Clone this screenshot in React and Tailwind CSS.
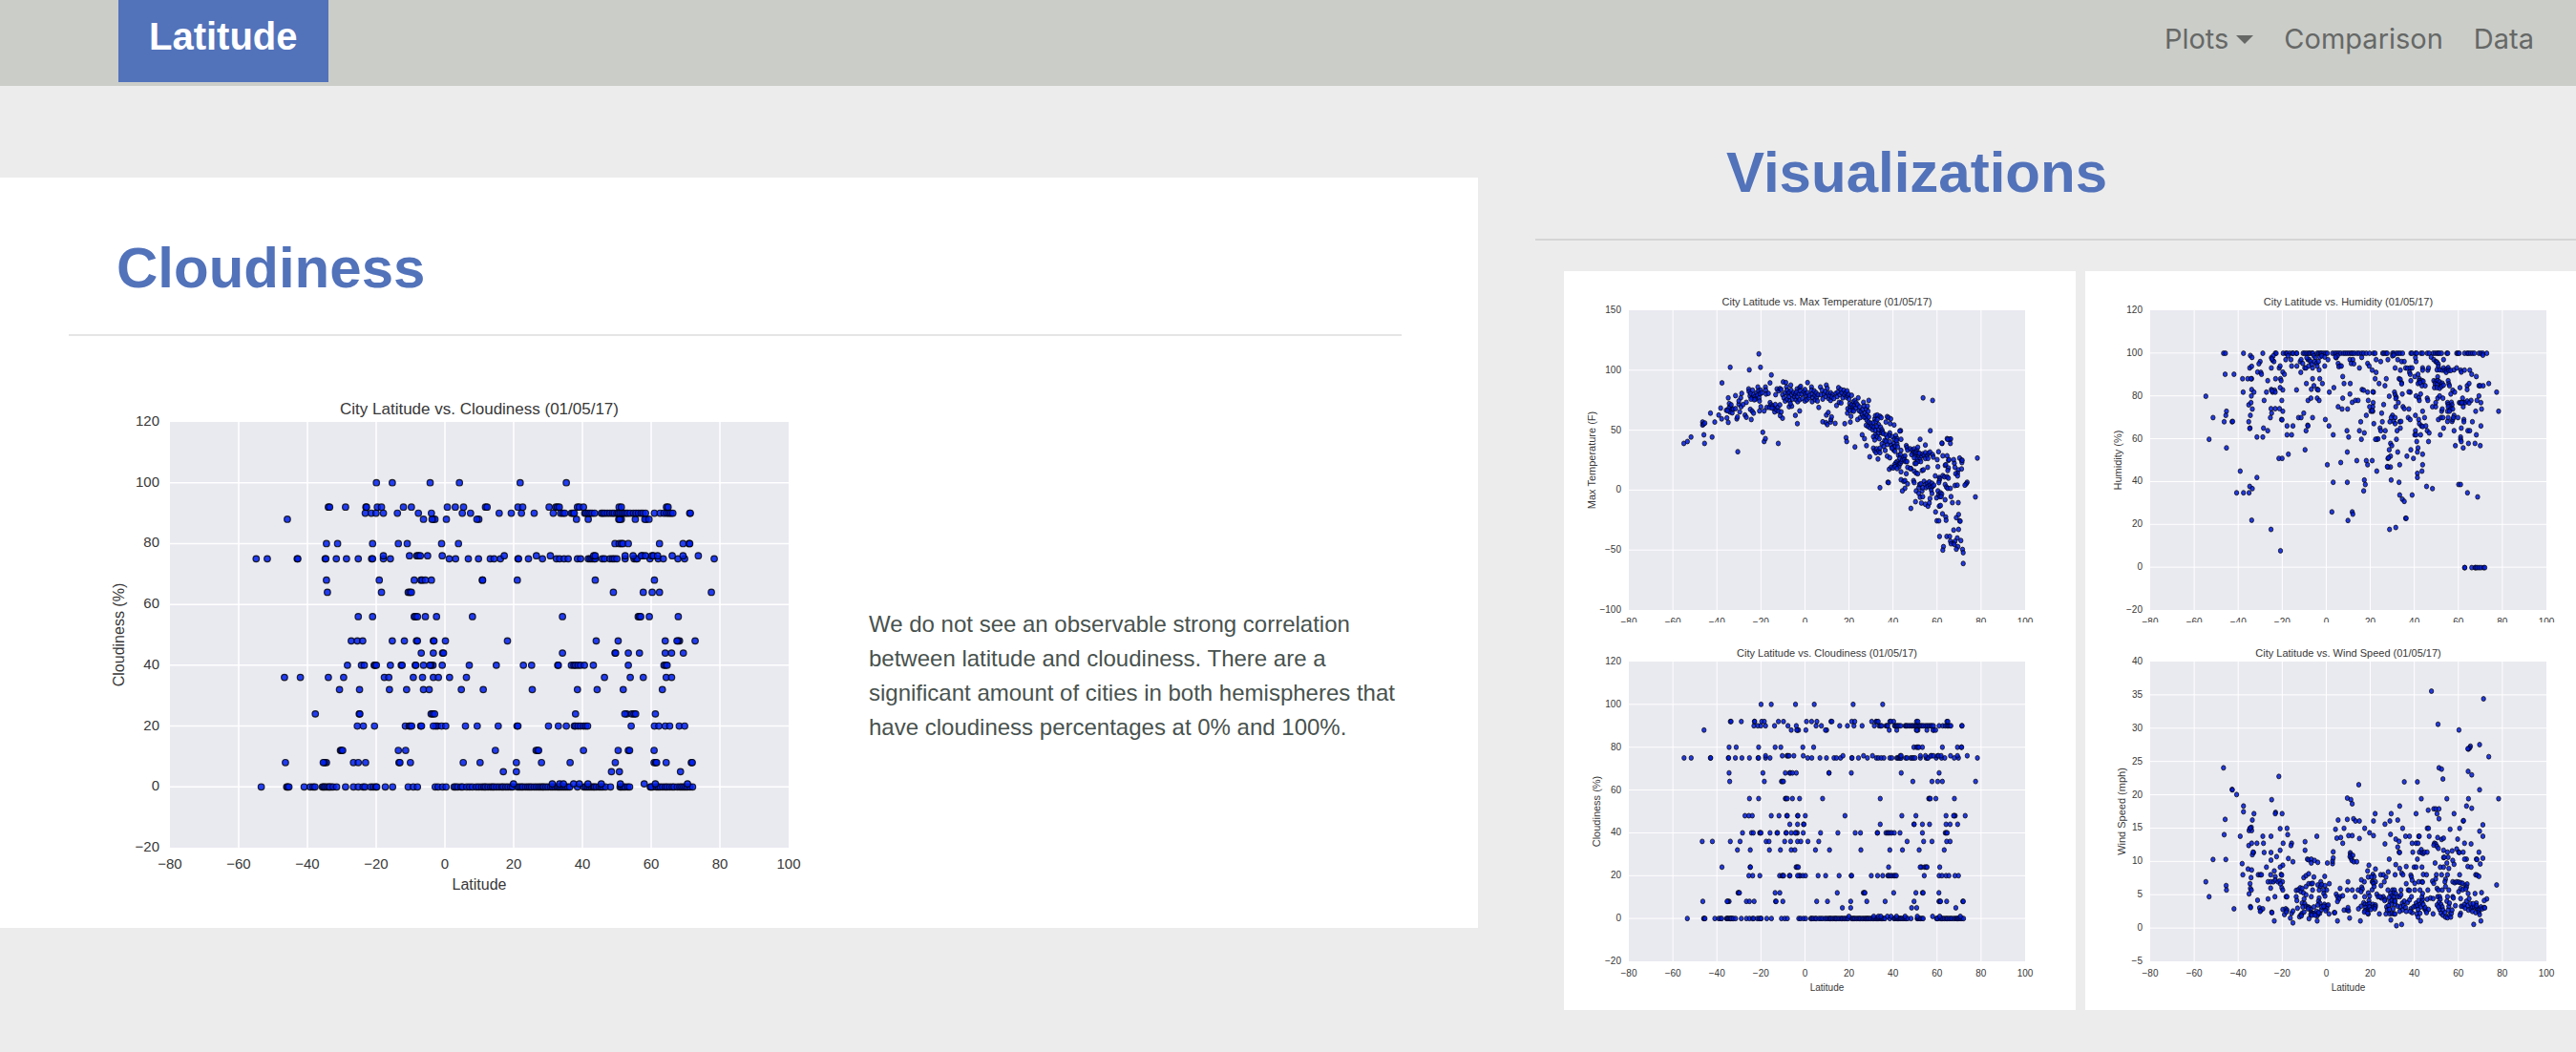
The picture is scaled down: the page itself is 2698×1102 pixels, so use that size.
import React from "react";

const INK = "#383838";
const LATITUDES = [-80, -60, -40, -20, 0, 20, 40, 60, 80, 100];

const label = (n) => String(n).replace("-", "\u2212");

// Reads "x,y x,y ..." into pairs.
const pairs = (text) =>
  text
    .trim()
    .split(/\s+/)
    .map((p) => p.split(",").map(Number));

// Each row is a cloudiness value with the horizontal positions of its cities.
const CLOUD_FRAME = [233, 120, 2178, -20];
const CLOUD_ROWS = {
  100: "882 932 1051 1143 1334 1479",
  92: "731 735 785 849 851 885 898 967 992 1105 1130 1156 1225 1230 1327 1342 1425 1446 1451 1457 1514 1520 1533 1645 1652 1794 1799",
  90: "847 866 881 904 948 1014 1055 1152 1178 1268 1306 1338 1378 1438 1461 1468 1474 1495 1500 1504 1537 1541 1548 1554 1560 1568 1589 1594 1600 1608 1616 1624 1630 1638 1643 1648 1654 1660 1666 1672 1680 1690 1698 1706 1714 1720 1728 1756 1774 1786 1795 1802 1808 1814 1867 1869",
  88: "602 1030 1061 1066 1057 1102 1204 1198 1511 1548 1652 1644 1647 1696 1730 1726 1739",
  80: "725 760 870 951 979 1087 1140 1632 1645 1652 1657 1674 1772 1846 1865 1867",
  75: "504 539 633 635 721 723 756 788 825 867 870 904 926 1111 1131 1171 1203 1240 1252 1272 1327 1329 1360 1404 1448 1458 1472 1485 1514 1524 1548 1554 1560 1566 1570 1592 1599 1616 1624 1630 1638 1664 1692 1698 1702 1742 1768 1784 1830 1851 1944",
  76: "904 986 1009 1014 1020 1043 1089 1284 1385 1429 1565 1570 1664 1689 1719 1715 1728 1748 1753 1766 1812 1846 1894",
  68: "725 891 1001 1022 1026 1036 1055 1215 1216 1325 1570 1756",
  64: "728 898 982 987 992 1627 1721 1749 1772 1935",
  56: "825 870 1001 1005 1011 1036 1071 1184 1467 1705 1709 1713 1740 1831",
  48: "803 822 839 932 970 1008 1011 1061 1063 1099 1294 1573 1642 1790 1835 1830 1827 1884",
  44: "1023 1061 1090 1093 1467 1632 1634 1674 1709 1790 1810 1847",
  40: "791 835 844 875 878 882 926 960 963 1004 1006 1030 1060 1054 1050 1089 1174 1259 1344 1370 1452 1454 1495 1503 1508 1516 1524 1536 1564 1674 1786 1791 1796",
  36: "593 643 731 779 907 921 998 1027 1061 1077 1112 1165 1599 1680 1721 1793 1810",
  32: "766 829 923 977 1030 1048 1149 1218 1372 1514 1576 1658 1781",
  24: "690 828 830 1054 1059 1065 1508 1669 1663 1685 1692 1697 1759",
  20: "822 841 876 973 985 989 993 1021 1024 1074 1068 1061 1087 1100 1162 1199 1265 1324 1327 1423 1454 1479 1504 1508 1516 1524 1533 1540 1546 1683 1756 1770 1790 1804 1834 1851",
  12: "769 772 776 951 974 1256 1384 1389 1392 1533 1642 1674 1678 1755",
  8: "596 725 719 715 810 825 848 953 956 989 1155 1208 1322 1401 1491 1633 1755 1760 1763 1793 1872 1875",
  5: "1281 1322 1621 1646 1838",
  1: "1313 1435 1458 1470 1502 1520 1547 1589 1649 1724 1759 1860",
  0: "520 600 603 607 655 674 683 689 712 716 720 726 732 740 735 746 757 785 810 825 840 846 864 872 880 883 910 933 982 998 1011 1067 1076 1090 1101 1126 1131 1138 1148 1153 1166 1175 1184 1196 1204 1213 1220 1225 1233 1241 1247 1252 1260 1268 1276 1281 1289 1296 1304 1310 1326 1332 1338 1343 1351 1358 1364 1370 1378 1385 1392 1398 1404 1408 1415 1422 1430 1436 1443 1450 1455 1460 1466 1472 1478 1484 1490 1514 1534 1540 1546 1552 1558 1564 1568 1574 1582 1588 1594 1602 1618 1648 1652 1658 1664 1672 1678 1743 1750 1746 1762 1768 1774 1782 1790 1796 1804 1812 1818 1828 1836 1842 1848 1854 1860 1868 1876",
};
const CLOUDINESS = Object.entries(CLOUD_ROWS).flatMap(([value, xs]) =>
  xs.split(" ").map((x) => [Number(x), Number(value)])
);

const TEMP_FRAME = [249, 165, 1453, 1106];
const TEMPERATURE = pairs(`
416,583 427,577 438,563 473,516 473,525 476,522 480,519 477,556 479,583 502,563 497,488 510,516 522,494 528,472 531,506 532,393
557,344 615,352 644,302 649,344 682,368 678,393 580,609 656,548 660,577 664,568 703,583 761,521 755,495 768,481 547,503 551,517
551,440 545,479 554,458 557,468 553,472 560,462 562,477 556,484 563,487 549,480 566,475 573,433 573,474 577,506 579,500 583,460
586,484 589,440 592,426 590,468 596,461 602,494 606,501 606,454 583,450 613,412 614,420 617,434 619,426 625,416 624,440 628,430
632,436 634,444 637,424 641,406 640,432 643,418 645,440 648,427 650,416 653,424 646,450 630,446 620,444 618,476 624,482 628,488
621,508 650,468 646,481 660,481 664,406 665,416 666,428 673,426 668,470 676,470 678,455 681,462 686,466 690,474 694,461 692,484
698,478 702,470 704,482 708,462 709,496 712,484 716,504 684,472 695,430 699,412 704,418 708,411 712,414 716,430 718,390 726,392
724,424 728,406 730,416 732,428 720,440 724,450 730,444 735,436 736,422 738,450 741,400 742,416 744,430 746,444 749,424 736,468
744,466 740,458 752,436 755,428 757,446 760,412 758,422 761,436 762,452 766,428 768,408 771,404 770,418 768,446 774,428 776,442
780,420 784,414 785,428 784,450 788,434 790,446 792,392 792,424 796,440 798,432 804,406 804,416 806,428 808,440 806,452 812,418
814,432 815,446 818,424 820,438 822,450 824,430 826,470 831,406 833,430 836,416 838,444 842,428 846,420 849,400 848,436 852,410
854,426 856,442 858,432 862,448 862,424 868,430 866,438 872,442 878,426 880,464 882,436 886,408 884,422 888,454 890,430 893,414
896,424 899,440 902,416 904,430 908,424 910,438 914,434 918,444 916,428 912,418 838,515 848,518 852,524 849,494 855,486 862,516
863,508 865,500 876,520 905,521 894,456 909,565 911,577 936,594 958,556 965,568 971,590 981,625 978,448 946,440 913,488 924,498
922,516 914,474 920,458 922,468 926,462 930,470 926,432 928,480 932,452 936,448 934,464 938,472 940,456 944,462 948,480 950,468
920,480 932,482 944,508 952,502 954,484 958,492 960,476 962,454 964,466 962,500 966,488 968,502 970,476 972,494 974,466 972,510
976,482 978,500 978,516 970,526 976,530 984,520 982,534 988,528 990,540 992,518 994,532 996,506 998,496 1004,494 1000,514 1004,508
1012,498 1016,502 1008,524 1002,530 998,542 1008,540 1014,532 1018,540 1016,550 1006,552 998,556 992,562 996,572 1004,562 1010,568
1020,546 1022,552 1030,516 1034,499 1038,502 1045,506 1043,521 1055,525 1042,550 1040,558 1030,556 1034,564 1026,574 1018,584
1024,592 1034,586 1030,576 1042,578 1050,562 1060,558 1056,570 1064,568 1075,543 1072,544 1076,570 1054,584 1046,590 1050,596
1058,592 1064,584 1062,574 1054,604 1058,608 1048,598 992,598 996,606 1002,600 1000,612 1008,606 1012,598 1012,612 1028,605
1006,632 1034,623 1042,628 1012,722 1036,705 1038,706 1066,594 1076,605 1092,590 1094,596 1096,604 1068,620 1074,618 1072,630
1064,640 1068,648 1060,644 1062,652 1056,650 1070,656 1074,646 1078,640 1080,634 1084,626 1088,622 1086,634 1090,640 1094,640
1040,664 1046,658 1052,660 1058,656 1064,662 1076,672 1092,678 1096,658 1106,662 1104,600 1110,604 1116,600 1112,612 1108,618
1118,612 1120,620 1124,604 1127,595 1122,612 1128,614 1130,624 1124,632 1134,632 1138,622 1132,614 1142,616 1146,620 1150,612
1136,640 1126,640 1116,628 1150,588 1134,570 1143,440 1172,448 1165,543 1150,630 1156,622 1160,614 1158,630 1164,610 1172,618
1174,626 1186,634 1190,609 1203,622 1216,622 1220,636 1201,583 1200,582 1216,568 1224,570 1227,569 1226,583 1218,570 1118,646
1122,646 1116,670 1122,676 1127,678 1140,668 1144,666 1157,658 1188,656 1210,652 1212,650 1220,660 1218,668 1238,645 1240,658
1236,634 1222,634 1254,629 1260,636 1261,643 1262,636 1260,663 1250,666 1248,676 1242,678 1248,685 1308,629 1277,705 1274,710
1270,714 1302,751 1180,685 1192,690 1194,694 1203,684 1208,688 1216,688 1220,692 1192,700 1191,706 1210,712 1214,720 1218,724
1226,724 1228,750 1240,715 1247,714 1250,769 1232,769 1210,760 1104,662 1076,697 1084,702 1088,700 1096,710 1088,724 1080,732
1114,700 1116,706 1122,732 1130,722 1132,712 1136,710 1140,732 1142,722 1146,702 1150,712 1152,722 1156,708 1158,718 1162,704
1164,714 1166,722 1170,708 1172,718 1176,714 1168,730 1170,740 1130,740 1134,752 1142,750 1120,766 1138,770 1150,774 1158,780
1162,770 1164,756 1106,787 1184,754 1188,732 1190,744 1194,750 1196,738 1200,742 1198,750 1192,780 1196,778 1181,798 1202,804
1212,814 1213,824 1185,826 1191,826 1244,816 1251,806 1254,826 1256,827 1251,853 1236,855 1193,875 1215,875 1224,875 1247,880
1258,888 1226,890 1228,898 1236,896 1240,890 1238,900 1249,907 1244,915 1205,907 1203,918 1263,916 1265,926 1265,960`);

const HUMID_FRAME = [266, 165, 1476, 1106];
const HUMIDITY = pairs(`
490,300 496,300 551,300 610,300 648,300 651,300 672,300 680,300 684,300 692,300 700,300 703,300 712,300 714,300 733,300 738,300
744,300 750,300 754,300 760,300 763,300 776,300 781,300 786,300 790,300 796,300 802,300 807,300 823,300 830,300 836,300 842,300
848,300 856,300 862,300 868,300 874,300 880,300 884,300 890,300 898,300 904,300 912,300 918,300 926,300 936,300 948,300 953,300
976,300 980,300 986,300 990,300 1006,300 1010,300 1018,300 1024,300 1030,300 1037,300 1062,300 1066,300 1076,300 1080,300
1093,300 1098,300 1112,300 1118,300 1130,300 1136,300 1142,300 1146,300 1150,300 1156,300 1172,300 1175,300 1202,300 1206,300
1210,300 1226,300 1234,300 1238,300 1244,300 1250,300 1256,300 1270,300 1276,300 1282,300 1294,300 1282,306 572,307 577,313
602,326 598,333 570,346 576,341 576,380 548,380 564,380 574,380 495,366 522,366 594,359 604,360 606,366 625,386 636,346 640,322
644,326 636,314 642,308 638,318 649,380 664,380 666,386 660,346 663,340 671,359 676,366 680,320 687,308 696,320 698,340 714,340
724,326 727,320 732,332 726,360 738,346 742,346 748,320 752,320 744,314 750,340 762,346 756,326 760,334 766,308 770,314 768,326
774,332 776,340 780,326 782,352 784,312 790,308 799,340 799,312 809,320 762,380 784,380 743,395 766,402 792,395 758,413 776,413
779,415 713,415 671,415 663,408 576,414 583,422 550,422 575,434 621,422 636,414 640,422 646,416 648,422 638,418 436,435 458,502
446,570 492,515 516,515 518,514 499,482 497,495 499,597 567,462 574,455 578,475 572,495 567,515 571,535 570,536 614,448 635,474
648,474 661,474 671,482 668,448 637,488 633,502 667,508 669,509 735,488 719,502 727,502 762,502 747,526 748,528 742,543 748,448
757,441 776,441 782,448 612,535 625,543 592,563 610,563 684,528 702,528 684,556 698,556 739,603 688,617 659,630 669,630 541,670
592,690 570,718 578,725 530,738 551,738 568,738 576,824 635,853 664,920 834,314 838,308 832,312 840,332 846,340 842,342 850,340
876,320 885,320 880,332 888,333 905,346 912,313 930,332 935,340 944,353 956,360 956,320 970,326 992,320 1006,308 1010,306
1022,320 1014,346 1030,353 1034,326 1042,326 1046,346 1052,347 1060,346 1066,346 1058,360 1060,366 1078,326 1076,314 1098,346
1098,353 1114,353 1116,346 1124,312 1132,320 1138,326 1142,328 1146,334 1146,342 1142,352 1150,352 1158,353 1162,346 1166,354
1172,350 1176,345 1170,360 1178,354 1184,354 1194,352 1202,346 1214,353 1216,359 1226,353 1242,353 1248,366 1262,373 1162,320
854,373 858,395 877,395 827,408 813,422 876,428 913,414 918,416 930,422 948,422 946,421 953,380 965,395 983,402 987,380 1026,380
1030,382 1034,393 1034,396 1062,386 1074,373 1084,366 1088,380 1088,386 1096,386 1100,388 1084,395 1096,402 1106,402 1090,392
1132,386 1138,388 1144,374 1144,386 1136,396 1142,398 1150,390 1154,398 1158,394 1134,408 1142,408 1150,410 1156,404 1162,400
1176,386 1178,396 1180,402 1190,416 1196,422 1184,428 1212,408 1234,402 1240,395 1234,414 1270,402 1274,402 1283,402 1300,395
1324,422 1330,482 1270,434 1264,448 1246,448 1276,455 1278,475 1260,482 1276,528 1250,515 1220,441 1222,455 1228,455 1234,450
1240,456 1210,455 1214,456 1222,468 1218,455 996,435 1012,422 1014,430 1018,438 1016,442 1036,428 1060,422 1056,421 1078,434
1086,440 1092,428 1088,448 1112,441 1114,448 1128,468 1138,468 1138,455 1144,441 1150,434 1160,441 1174,455 1176,461 1186,454
1188,462 1182,468 1176,468 1184,475 1190,475 1174,482 1156,482 1158,475 1180,482 854,441 840,468 852,475 869,475 883,454 893,448
901,448 932,448 947,455 946,468 936,468 940,482 946,482 944,480 926,495 979,461 973,488 949,521 909,515 975,515 968,535 920,550
905,543 867,543 872,563 911,570 825,556 812,528 801,508 958,570 962,569 980,563 970,543 984,543 954,570 1016,468 1024,455
1038,468 1042,474 1056,475 1006,495 1002,502 1014,502 1010,514 998,515 1014,521 1028,515 1032,514 1030,535 1020,543 1018,570
1076,495 1054,502 1060,508 1086,508 1088,521 1094,528 1098,530 1108,528 1104,502 1098,482 1076,543 1074,556 1078,556 1092,556
1112,543 1118,550 1080,577 1116,577 1152,556 1162,535 1146,508 1154,502 1160,502 1174,514 1176,502 1188,514 1190,508 1194,495
1192,502 1206,502 1224,508 1224,515 1216,535 1194,543 1236,543 1242,543 1214,563 1214,570 1216,577 1198,590 1222,597 1238,583
1258,583 1274,590 1262,556 868,610 897,637 926,637 944,637 848,643 807,650 930,650 958,670 920,698 923,712 918,732 868,705
825,705 821,798 883,798 885,805 870,825 1000,583 1004,590 996,603 1022,610 1062,603 1084,597 1082,610 1098,617 1000,623 992,630
994,628 1050,623 1070,630 1028,650 1000,657 992,657 990,656 1098,650 1096,670 1082,677 1082,690 1002,698 1026,705 1028,745
1066,745 1036,758 1042,765 1110,718 1128,725 1046,818 1048,818 1016,847 997,853 1208,712 1214,712 1235,738 1266,751 1226,973
1227,973 1248,973 1258,973 1260,973 1264,973 1270,973 1276,973 1284,973 1288,973`);

const WIND_FRAME = [266, 99, 1476, 1041];
const WIND = pairs(`
490,433 516,501 517,502 530,517 551,553 551,571 495,595 492,643 541,648 583,577 578,597 575,620 570,624 568,630 576,630 572,622
567,677 576,670 592,670 610,648 612,670 614,699 582,699 578,706 580,698 458,721 497,721 547,734 565,751 576,754 549,769 574,778
571,797 436,791 446,838 498,803 499,817 522,876 568,829 572,812 575,817 572,869 573,872 594,849 596,769 602,769 606,769 600,873
604,880 610,876 602,884 635,648 637,533 659,460 649,573 648,577 669,577 663,624 684,623 686,643 672,670 698,670 696,677 663,692
635,699 652,712 635,723 688,718 702,728 739,665 739,692 775,648 671,739 663,745 621,745 645,757 634,769 648,775 666,768 668,770
626,791 634,791 642,791 648,786 656,791 662,788 670,791 664,798 668,810 634,811 671,817 647,838 626,845 681,838 684,838 645,914
637,887 638,888 671,878 680,876 684,880 676,894 682,886 694,905 698,890 702,883 702,920 722,901 726,895 730,890 736,886 728,898
716,874 712,838 714,850 712,818 718,816 724,810 726,822 734,826 736,845 742,832 730,858 738,860 732,870 742,868 748,870 752,872
730,812 742,806 750,797 758,797 762,796 735,778 742,772 750,766 766,776 799,774 746,720 750,722 758,720 758,732 768,724 778,730
807,732 823,734 823,726 825,716 825,697 813,797 787,791 778,801 786,806 790,800 800,803 805,817 796,818 782,817 762,817 796,828
800,836 758,838 782,842 780,852 784,858 778,864 766,870 756,878 748,876 758,888 762,890 756,894 768,890 774,884 778,894 776,898
784,890 788,880 790,870 798,862 800,874 806,866 810,864 806,876 802,882 812,892 828,888 830,888 776,914 751,907 796,868 760,896
770,896 780,888 903,486 868,528 879,533 883,546 868,595 840,597 887,593 893,600 905,600 832,626 858,623 836,654 848,652 854,670
872,646 883,646 905,655 921,623 936,637 948,646 948,600 953,577 983,610 983,672 877,700 878,706 876,712 885,708 880,718 882,724
888,728 897,728 934,739 930,757 954,751 932,776 870,791 846,812 868,817 883,817 901,817 912,808 914,814 910,822 920,791 911,785
834,830 838,838 846,838 854,835 842,845 838,853 892,838 921,838 932,826 936,836 944,816 958,830 962,838 918,857 922,862 930,862
934,850 936,860 910,868 902,876 924,872 930,878 936,870 928,884 922,882 932,892 920,886 940,878 946,862 948,870 954,864 954,870
952,876 858,880 868,880 872,882 870,872 875,905 838,914 908,914 966,892 930,890 946,768 950,775 942,776 944,791 946,792 954,791
948,797 950,806 971,803 970,769 978,769 986,776 993,760 981,791 1000,642 1016,657 1026,664 1022,597 998,600 1002,577 1028,553
1037,623 1042,477 1082,477 1094,530 1078,577 1046,648 1058,648 1086,648 1088,648 1118,648 1112,623 1116,623 1115,566 1125,192
1145,296 1209,314 1284,216 1272,360 1244,365 1242,370 1238,374 1236,373 1300,398 1148,433 1156,437 1160,468 1237,444 1248,455
1272,502 1330,530 1324,801 1238,530 1232,553 1248,560 1172,530 1194,577 1132,562 1138,562 1148,562 1142,577 1148,593 1222,600
1223,599 1282,612 1272,632 1282,648 1211,623 1182,626 1205,657 1226,670 1246,672 1270,698 1282,717 1274,735 1262,720 1264,721
1232,720 1226,720 1202,688 1188,694 1208,698 1210,699 1222,698 1144,652 1156,658 1162,654 1066,670 1078,670 1084,670 1134,670
1138,672 1132,676 1142,680 1146,686 1162,692 1174,698 1022,682 1026,698 1028,699 1068,698 1088,698 1094,690 1096,700 1100,702
1104,698 1112,698 1176,714 1162,715 1164,714 1190,724 1194,736 1172,732 1136,732 996,720 1082,720 1016,737 1028,749 1048,743
1072,745 1078,745 1096,745 1152,745 1162,745 1178,749 1236,743 1246,745 1034,764 1014,769 1038,769 1062,770 1064,776 1066,786
1048,797 1100,768 1110,769 1140,769 1156,769 1174,769 1211,769 1260,769 1264,770 1270,774 1138,782 1128,789 1132,796 1168,783
1166,791 1074,796 1086,791 1096,791 1098,792 1190,791 1196,794 1202,791 1208,792 1214,794 1220,796 1228,802 1234,798 1232,808
1278,825 1258,828 1237,828 1294,845 1286,850 992,817 1006,817 1012,817 1010,826 1016,828 1032,817 1054,817 1058,818 1074,817
1090,817 1114,817 1142,812 1146,817 1158,817 1178,817 1168,806 1208,822 1214,812 1220,816 1230,814 1000,828 1004,836 1010,840
1022,838 1028,838 1032,832 978,838 972,842 984,846 968,838 982,850 996,840 998,854 1004,850 1012,850 1002,862 1014,862 1014,852
988,870 994,866 990,880 986,892 998,892 1004,890 1010,892 1014,892 996,878 1008,876 1022,868 1030,870 1036,858 1042,852 1036,880
1028,884 1040,866 1046,872 1052,856 1048,884 1058,848 1064,838 1062,876 1066,888 1060,884 1070,870 1076,868 1078,858 1082,866
1086,850 1090,862 1092,870 1096,854 1098,846 1100,862 1096,838 1098,828 1084,878 1080,892 1084,902 1092,914 1090,890 1104,876
1108,882 1106,872 1116,878 1110,888 1130,892 1112,846 1122,842 1130,844 1144,838 1150,838 1152,846 1148,856 1142,864 1154,862
1158,870 1150,878 1146,870 1160,880 1154,890 1160,896 1166,888 1168,902 1174,904 1180,896 1184,902 1176,880 1186,890 1188,880
1178,868 1172,852 1180,858 1190,838 1192,842 1174,838 1198,866 1214,844 1216,868 1222,868 1214,890 1212,896 1226,862 1228,874
1232,852 1240,844 1236,866 1238,880 1246,876 1250,870 1244,860 1250,884 1262,858 1256,870 1262,872 1266,880 1260,888 1270,886
1272,876 1276,870 1280,876 1286,872 1288,873 1272,894 1262,866 1252,860 1276,914 1254,925 1034,925 1018,929 1001,911`);

function ScatterPlot({ title, yLabel, ticks, points, frame, box, size, className, fit }) {
  const [left, top, right, bottom] = box;
  const [fx0, fy0, fx1, fy1] = frame;
  const px = (x) => left + ((x - fx0) / (fx1 - fx0)) * (right - left);
  const py = (y) => top + ((y - fy0) / (fy1 - fy0)) * (bottom - top);
  const tickX = (v) => left + ((v + 80) / 180) * (right - left);
  const low = ticks[0];
  const high = ticks[ticks.length - 1];
  const tickY = (v) => bottom - ((v - low) / (high - low)) * (bottom - top);
  const centreX = (left + right) / 2;
  const centreY = (top + bottom) / 2;

  return (
    <svg
      role="img"
      aria-label={title}
      viewBox={`0 0 ${size.width} ${size.height}`}
      preserveAspectRatio={fit}
      className={className}
      fill={INK}
      fontFamily='"Liberation Sans", Arial, sans-serif'
    >
      <rect x={left} y={top} width={right - left} height={bottom - top} fill="#e9e9f0" />
      <g stroke="#fff" strokeWidth={size.grid}>
        {LATITUDES.slice(1, -1).map((v) => (
          <line key={v} x1={tickX(v)} x2={tickX(v)} y1={top} y2={bottom} />
        ))}
        {ticks.slice(1, -1).map((v) => (
          <line key={v} x1={left} x2={right} y1={tickY(v)} y2={tickY(v)} />
        ))}
      </g>
      <g fill={size.dotFill} stroke="#000" strokeOpacity="0.8" strokeWidth={size.stroke}>
        {points.map(([x, y], i) => (
          <ellipse key={i} cx={px(x)} cy={py(y)} rx={size.rx} ry={size.ry} />
        ))}
      </g>
      <text x={centreX} y={top - size.titleGap} textAnchor="middle" fontSize={size.title}>
        {title}
      </text>
      <g fontSize={size.tick} textAnchor="middle">
        {LATITUDES.map((v) => (
          <text key={v} x={tickX(v)} y={bottom + size.tickDrop}>
            {label(v)}
          </text>
        ))}
      </g>
      <g fontSize={size.tick} textAnchor="end">
        {ticks.map((v) => (
          <text key={v} x={left - size.tickGap} y={tickY(v) + size.tickRise}>
            {label(v)}
          </text>
        ))}
      </g>
      {size.height > bottom + size.labelDrop && (
        <text x={centreX} y={bottom + size.labelDrop} textAnchor="middle" fontSize={size.xLabel}>
          Latitude
        </text>
      )}
      <text
        transform={`translate(${size.yLabelX} ${centreY}) rotate(-90)`}
        textAnchor="middle"
        fontSize={size.yLabel}
      >
        {yLabel}
      </text>
    </svg>
  );
}

const LARGE = {
  width: 800, height: 596, grid: 1.5, dotFill: "rgba(0,32,240,0.86)", stroke: 1.2, rx: 3.3, ry: 3.3,
  title: 17, xLabel: 16, yLabel: 16, tick: 15, titleGap: 8, tickDrop: 22, tickGap: 11,
  tickRise: 4, labelDrop: 44, yLabelX: 58,
};
const SMALL = {
  width: 536, grid: 1, dotFill: "rgba(0,28,225,0.86)", stroke: 0.9, rx: 2.2, ry: 2.5,
  title: 11, xLabel: 10, yLabel: 11, tick: 10, titleGap: 5, tickDrop: 16, tickGap: 8,
  tickRise: 3, labelDrop: 31,
};
const SMALL_BOX = [68, 41, 483, 355];
const PERCENT_TICKS = [-20, 0, 20, 40, 60, 80, 100, 120];

const COLUMNS = [
  [
    { title: "City Latitude vs. Max Temperature (01/05/17)", yLabel: "Max Temperature (F)", ticks: [-100, -50, 0, 50, 100, 150], points: TEMPERATURE, frame: TEMP_FRAME, yLabelX: 33 },
    { title: "City Latitude vs. Cloudiness (01/05/17)", yLabel: "Cloudiness (%)", ticks: PERCENT_TICKS, points: CLOUDINESS, frame: CLOUD_FRAME, yLabelX: 38 },
  ],
  [
    { title: "City Latitude vs. Humidity (01/05/17)", yLabel: "Humidity (%)", ticks: PERCENT_TICKS, points: HUMIDITY, frame: HUMID_FRAME, yLabelX: 38 },
    { title: "City Latitude vs. Wind Speed (01/05/17)", yLabel: "Wind Speed (mph)", ticks: [-5, 0, 5, 10, 15, 20, 25, 30, 35, 40], points: WIND, frame: WIND_FRAME, yLabelX: 42 },
  ],
];

function Thumbnail({ chart, last }) {
  const { yLabelX, ...rest } = chart;
  return (
    <a href="#" className="block">
      <ScatterPlot
        {...rest}
        box={SMALL_BOX}
        size={{ ...SMALL, height: last ? 406 : 368, yLabelX }}
        fit="xMinYMin slice"
        className={last ? "block h-[406px] w-full" : "block h-[368px] w-full"}
      />
    </a>
  );
}

function NavBar() {
  return (
    <nav className="flex h-[90px] items-start justify-between bg-[#cbcdc9] pr-7 pl-[124px]">
      <a
        href="#"
        className="h-[86px] bg-[#5272ba] px-8 pt-[14px] text-[40px] leading-[48px] font-bold text-white"
      >
        Latitude
      </a>
      <div className="flex h-[82px] items-center font-[Inter,sans-serif] text-[29px] leading-[44px] text-[#666866]">
        <button type="button" aria-haspopup="menu" className="flex items-center gap-2 px-4">
          Plots
          <svg viewBox="0 0 18 9" className="h-[9px] w-[18px]" fill="currentColor" aria-hidden="true">
            <path d="M0 0h18L9 9z" />
          </svg>
        </button>
        <a href="#" className="px-4">Comparison</a>
        <a href="#" className="px-4">Data</a>
      </div>
    </nav>
  );
}

export default function App() {
  return (
    <div className="min-h-screen overflow-hidden bg-[#ececec] font-['Liberation_Sans',Arial,sans-serif]">
      <NavBar />
      <main className="grid grid-cols-[774fr_575fr] items-start">
        <section className="mt-24 bg-white pt-[59px]">
          <h1 className="pl-[122px] text-[60px] leading-[72px] font-bold text-[#5272ba]">Cloudiness</h1>
          <hr className="mt-[33px] mr-20 ml-[72px] border-t-2 border-[#e5e5e5]" />
          <div className="mt-6 flex items-start pr-20 pl-[72px]">
            <ScatterPlot
              title="City Latitude vs. Cloudiness (01/05/17)"
              yLabel="Cloudiness (%)"
              ticks={PERCENT_TICKS}
              points={CLOUDINESS}
              frame={CLOUD_FRAME}
              box={[106, 66, 754, 512]}
              size={LARGE}
              className="h-[596px] w-[800px] shrink-0"
            />
            <p className="ml-[38px] flex-1 pt-[260px] text-2xl leading-9 text-[#48524e]">
              We do not see an observable strong correlation between latitude and cloudiness. There are a
              significant amount of cities in both hemispheres that have cloudiness percentages at 0% and
              100%.
            </p>
          </div>
        </section>
        <section className="pt-[55px] pl-[60px]">
          <h1 className="pl-[200px] text-[60px] leading-[72px] font-bold text-[#5272ba]">Visualizations</h1>
          <hr className="mt-[33px] border-t-2 border-[#d5d5d5]" />
          <div className="mt-8 grid grid-cols-[536fr_514fr] gap-[10px] pl-[30px]">
            {COLUMNS.map((charts) => (
              <div key={charts[0].title} className="bg-white">
                {charts.map((chart, i) => (
                  <Thumbnail key={chart.title} chart={chart} last={i === 1} />
                ))}
              </div>
            ))}
          </div>
        </section>
      </main>
    </div>
  );
}
